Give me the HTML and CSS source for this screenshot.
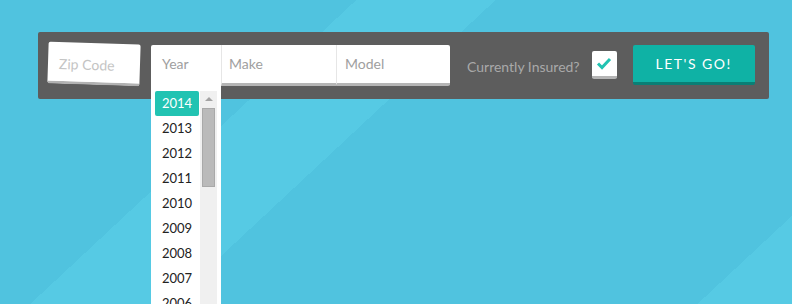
FILE: index.html
```html
<!DOCTYPE html>
<html>
<head>
    <title>Quote</title>
    <link rel="stylesheet" href="styles.css">
</head>
<body>
    <div class="bar">
        <div class="zip">Zip Code</div>
        <div class="fields">
            <div class="field year">
                Year
                <div class="dropdown">
                    <ul class="years">
                        <li class="active">2014</li>
                        <li>2013</li>
                        <li>2012</li>
                        <li>2011</li>
                        <li>2010</li>
                        <li>2009</li>
                        <li>2008</li>
                        <li>2007</li>
                        <li>2006</li>
                    </ul>
                    <div class="scroll">
                        <span class="arrow"></span>
                        <span class="thumb"></span>
                    </div>
                </div>
            </div>
            <div class="field make">Make</div>
            <div class="field model">Model</div>
        </div>
        <span class="insured">Currently Insured?</span>
        <div class="check">
            <svg width="16" height="13" viewBox="0 0 16 13"><polyline points="2,6.5 6,10.5 14,2" fill="none" stroke="#22c3b2" stroke-width="3"/></svg>
        </div>
        <button class="go">LET'S GO!</button>
    </div>
</body>
</html>
```

FILE: styles.css
```css
html{
    height: 100%;
    background: linear-gradient(137deg, #50c3df 0, #50c3df 243px, #56cae4 243px, #56cae4 338px, #50c3df 338px, #50c3df 698px, #56cae4 698px);
}
body{
    margin: 0;
    height: 100%;
    overflow: hidden;
    font-family: Lato, "Open Sans", sans-serif;
}
.bar{
    margin: 32px 0 0 38px;
    width: 731px;
    height: 67px;
    box-sizing: border-box;
    padding: 10px 14px 0 10px;
    background-color: #5d5d5d;
    border-radius: 2px;
    display: flex;
    align-items: flex-start;
}
.zip{
    width: 92px;
    height: 42px;
    box-sizing: border-box;
    padding: 13px 0 0 11px;
    background-color: #fff;
    border-bottom: 3px solid #b2b2b2;
    border-radius: 2px;
    color: #c4c4c4;
    font-size: 14px;
    transform: rotate(1.8deg);
    margin-top: 1px;
}
.fields{
    margin: 3px 0 0 11px;
    display: flex;
    width: 299px;
    border-radius: 2px;
}
.field{
    height: 38px;
    line-height: 38px;
    background-color: #fff;
    color: #a0a0a0;
    font-size: 14px;
    box-sizing: border-box;
}
.year{
    position: relative;
    width: 70px;
    height: 41px;
    padding-left: 11px;
    border-radius: 2px 0 0 0;
}
.make, .model{
    border-bottom: 3px solid #b5b5b5;
    height: 41px;
    border-left: 1px solid #e6e6e6;
    padding-left: 7px;
}
.make{
    width: 115px;
}
.model{
    width: 114px;
    padding-left: 8px;
    border-radius: 0 2px 2px 0;
}
.dropdown{
    position: absolute;
    left: 0;
    top: 41px;
    width: 70px;
    height: 230px;
    background-color: #fff;
    display: flex;
    padding: 5px 4px 0 4px;
    box-sizing: border-box;
}
.years{
    list-style: none;
    margin: 0;
    padding: 0;
    width: 45px;
}
.years li{
    height: 25px;
    line-height: 25px;
    padding-left: 7px;
    color: #222;
    font-size: 13px;
    border-radius: 2px;
}
.years li.active{
    background-color: #22c3b2;
    color: #fff;
}
.scroll{
    width: 17px;
    margin-left: 1px;
    background-color: #f0f0f0;
    display: flex;
    flex-direction: column;
    align-items: center;
}
.arrow{
    margin-top: 6px;
    border-left: 4px solid transparent;
    border-right: 4px solid transparent;
    border-bottom: 4px solid #a3a3a3;
}
.thumb{
    margin-top: 7px;
    width: 11px;
    height: 77px;
    background-color: #bababa;
    border: 1px solid #a9a9a9;
}
.insured{
    margin: 16px 0 0 17px;
    color: #a9a9a9;
    font-size: 14px;
}
.check{
    margin: 9px 0 0 12px;
    width: 25px;
    height: 28px;
    box-sizing: border-box;
    background-color: #fff;
    border-bottom: 3px solid #b5b5b5;
    border-radius: 2px;
    display: flex;
    justify-content: center;
    align-items: center;
}
.go{
    margin: 3px 0 0 16px;
    width: 122px;
    height: 40px;
    border: none;
    border-bottom: 3px solid #0a7f75;
    border-radius: 2px;
    background-color: #0fb2a5;
    color: #fff;
    font-family: Lato, "Open Sans", sans-serif;
    font-size: 14px;
    letter-spacing: 1.5px;
    padding: 0;
}
```
